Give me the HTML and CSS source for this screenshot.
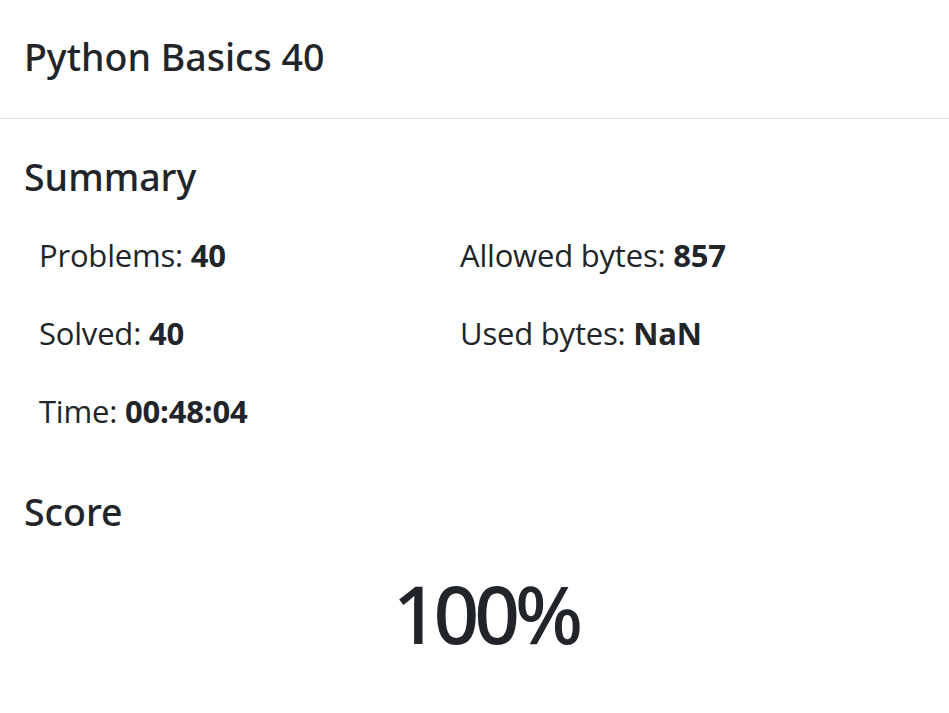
FILE: index.html
```html
<!DOCTYPE html>
<html lang="en">
<head>
<meta charset="utf-8">
<title>Python Basics 40</title>
<link rel="stylesheet" href="styles.css">
</head>
<body>
<div class="modal">
  <header class="modal-header">
    <h5 class="modal-title">Python Basics 40</h5>
  </header>
  <section class="modal-body">
    <h5 class="section-title">Summary</h5>
    <div class="stats">
      <p class="stat">Problems: <b>40</b></p>
      <p class="stat">Allowed bytes: <b>857</b></p>
      <p class="stat">Solved: <b>40</b></p>
      <p class="stat">Used bytes: <b>NaN</b></p>
      <p class="stat">Time: <b>00:48:04</b></p>
    </div>
    <h5 class="section-title score-title">Score</h5>
    <div class="score">100%</div>
  </section>
</div>
</body>
</html>
```

FILE: styles.css
```css
html, body {
  margin: 0;
  padding: 0;
  background: #ffffff;
}
body {
  font-family: "Open Sans", "Noto Sans", "Liberation Sans", sans-serif;
  color: #212529;
}
.modal {
  width: 949px;
}
.modal-header {
  padding: 34px 24px 38px 24px;
  border-bottom: 1px solid #dee2e6;
}
.modal-title {
  margin: 0;
  font-family: "Noto Sans", "Open Sans", sans-serif;
  font-size: 37.5px;
  line-height: 46px;
  font-weight: 500;
}
.modal-body {
  padding: 35px 24px 40px 24px;
}
.section-title {
  margin: 0;
  font-family: "Noto Sans", "Open Sans", sans-serif;
  font-size: 37.5px;
  line-height: 46px;
  font-weight: 500;
}
.stats {
  display: grid;
  grid-template-columns: 421px 1fr;
  row-gap: 31px;
  padding-left: 15px;
  margin-top: 32px;
}
.stat {
  margin: 0;
  font-size: 31px;
  line-height: 47px;
  font-weight: 400;
  letter-spacing: -0.2px;
}
.stat b {
  font-weight: 700;
}
.score-title {
  margin-top: 54px;
}
.score {
  margin-top: 30px;
  padding-left: 22px;
  text-align: center;
  font-family: "Noto Sans", "Open Sans", sans-serif;
  font-size: 80px;
  line-height: 96px;
  font-weight: 500;
  letter-spacing: -5px;
}
```
